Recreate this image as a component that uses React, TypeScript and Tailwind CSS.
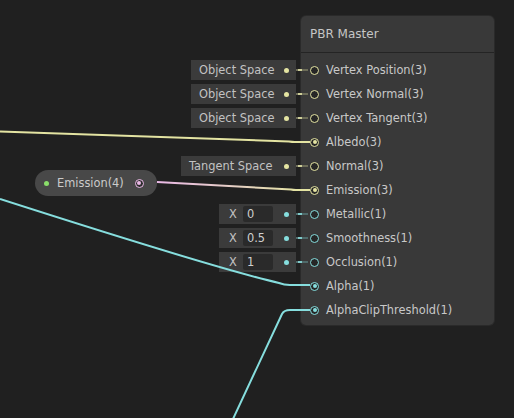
import React from 'react';

type Kind = 'vec' | 'float';

interface Slot {
  label: string;
  kind: Kind;
  connected?: boolean;
  field?: { type: 'space'; text: string; width: string } | { type: 'x'; value: string };
}

const slots: Slot[] = [
  { label: 'Vertex Position(3)', kind: 'vec', field: { type: 'space', text: 'Object Space', width: 'w-[105px]' } },
  { label: 'Vertex Normal(3)', kind: 'vec', field: { type: 'space', text: 'Object Space', width: 'w-[105px]' } },
  { label: 'Vertex Tangent(3)', kind: 'vec', field: { type: 'space', text: 'Object Space', width: 'w-[105px]' } },
  { label: 'Albedo(3)', kind: 'vec', connected: true },
  { label: 'Normal(3)', kind: 'vec', field: { type: 'space', text: 'Tangent Space', width: 'w-[115px]' } },
  { label: 'Emission(3)', kind: 'vec', connected: true },
  { label: 'Metallic(1)', kind: 'float', field: { type: 'x', value: '0' } },
  { label: 'Smoothness(1)', kind: 'float', field: { type: 'x', value: '0.5' } },
  { label: 'Occlusion(1)', kind: 'float', field: { type: 'x', value: '1' } },
  { label: 'Alpha(1)', kind: 'float', connected: true },
  { label: 'AlphaClipThreshold(1)', kind: 'float', connected: true },
];

function Port({ kind, connected }: { kind: Kind; connected?: boolean }) {
  const ring = kind === 'vec' ? 'border-[#e4e4a2]' : 'border-[#86dede]';
  const dot = kind === 'vec' ? 'bg-[#e4e4a2]' : 'bg-[#86dede]';
  return (
    <div className={`w-[9px] h-[9px] rounded-full border-[1.5px] ${ring} bg-[#262626] flex items-center justify-center shrink-0`}>
      {connected && <div className={`w-[4px] h-[4px] rounded-full ${dot}`} />}
    </div>
  );
}

function InlineField({ slot }: { slot: Slot }) {
  const f = slot.field!;
  const dotColor = slot.kind === 'vec' ? 'bg-[#e4e4a2]' : 'bg-[#86dede]';
  const lineColor = slot.kind === 'vec' ? 'bg-[#6c6c58]' : 'bg-[#4f6a6a]';
  const lineBright = slot.kind === 'vec' ? 'bg-[#cfcf98]' : 'bg-[#7fcaca]';
  return (
    <>
      <div className={`absolute left-[-11px] top-[11px] w-[18px] h-[2px] ${lineColor}`} />
      <div className={`absolute left-[-3px] top-[11px] w-[4px] h-[2px] ${lineBright}`} />
      {f.type === 'space' ? (
        <div className={`absolute right-[calc(100%+5px)] top-[2px] h-[20px] ${f.width} bg-[#3b3b3b] flex items-center pl-[8px] pr-[7px] text-[#c2c2c2]`}>
          <span className="pt-px">{f.text}</span>
          <div className={`ml-auto w-[5px] h-[5px] rounded-full ${dotColor}`} />
        </div>
      ) : (
        <div className="absolute right-[calc(100%+5px)] top-[2px] h-[20px] w-[77px] bg-[#3b3b3b] flex items-center pl-[10px] pr-[7px] text-[#c2c2c2]">
          <span className="w-[14px] pt-px">X</span>
          <div className="h-[16px] w-[30px] rounded-[2px] bg-[#2a2a2a] flex items-center pl-[4px] pt-px text-[#d0d0d0]">{f.value}</div>
          <div className={`ml-auto w-[5px] h-[5px] rounded-full ${dotColor}`} />
        </div>
      )}
    </>
  );
}

function Wires() {
  return (
    <svg className="absolute inset-0 pointer-events-none" width={514} height={418} viewBox="0 0 514 418">
      <defs>
        <linearGradient id="emi" x1="157" y1="0" x2="300" y2="0" gradientUnits="userSpaceOnUse">
          <stop offset="0" stopColor="#eab9e6" />
          <stop offset="0.55" stopColor="#e6d0c4" />
          <stop offset="1" stopColor="#e4e4a2" />
        </linearGradient>
      </defs>
      <path d="M0 131.5 L289 141.5 Q292 142 295 142 L310 142" fill="none" stroke="#e4e4a2" strokeWidth={2} />
      <path d="M157 182 L291 189.5 Q293 190 296 190 L310 190" fill="none" stroke="url(#emi)" strokeWidth={2} />
      <path d="M0 199 Q215 268 279 283 Q284 285 290 285 L310 285" fill="none" stroke="#86dede" strokeWidth={2} />
      <path d="M233 419 L282 314 Q284 310 290 310 L310 310" fill="none" stroke="#86dede" strokeWidth={2} />
    </svg>
  );
}

export default function App() {
  return (
    <div
      className="relative w-[514px] h-[418px] bg-[#202020] overflow-hidden text-[11.4px] leading-none"
      style={{ fontFamily: '"DejaVu Sans", Verdana, sans-serif' }}
    >
      {/* Emission property node */}
      <div className="absolute left-[35px] top-[170px] w-[122px] h-[26px] rounded-full bg-[#484848] flex items-center text-[#cbcbcb]">
        <div className="ml-[9px] w-[5px] h-[5px] rounded-full bg-[#8ade6a]" />
        <span className="ml-[8px] pt-px">Emission(4)</span>
        <div className="ml-[11px] w-[9px] h-[9px] rounded-full border-[1.5px] border-[#eab9e6] bg-[#2e2e2e] flex items-center justify-center">
          <div className="w-[4px] h-[4px] rounded-full bg-[#eab9e6]" />
        </div>
      </div>

      {/* PBR Master node */}
      <div className="absolute left-[301px] top-[16px] w-[193px] h-[309px] rounded-[5px] bg-[#393939] shadow-[0_0_0_1px_#2a2a2a]">
        <div className="h-[36px] flex items-center pl-[9px] text-[12px] text-[#c6c6c6]">PBR Master</div>
        <div className="h-px bg-[#242424]" />
        <div className="pt-[5px] flex flex-col">
          {slots.map((s) => (
            <div key={s.label} className="relative h-[24px] flex items-center">
              {s.field && <InlineField slot={s} />}
              <div className="ml-[9px]">
                <Port kind={s.kind} connected={s.connected} />
              </div>
              <span className="ml-[7px] pt-px text-[#c8c8c8]">{s.label}</span>
            </div>
          ))}
        </div>
      </div>

      <Wires />
    </div>
  );
}
